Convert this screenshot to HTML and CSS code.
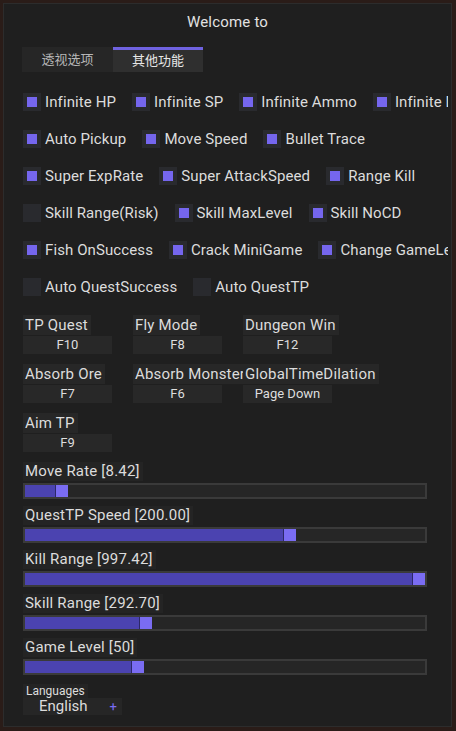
FILE: index.html
```html
<!DOCTYPE html>
<html>
<head>
<meta charset="utf-8">
<link rel="stylesheet" href="styles.css">
</head>
<body>
<div class="window">
  <div class="title">Welcome to</div>
  <div class="tabs">
    <div class="tab">透视选项</div>
    <div class="tab active">其他功能</div>
  </div>
  <div class="content">
    <div class="row">
      <div class="cb on"><span class="box"></span>Infinite HP</div>
      <div class="cb on"><span class="box"></span>Infinite SP</div>
      <div class="cb on"><span class="box"></span>Infinite Ammo</div>
      <div class="cb on"><span class="box"></span>Infinite Durability</div>
    </div>
    <div class="row">
      <div class="cb on"><span class="box"></span>Auto Pickup</div>
      <div class="cb on"><span class="box"></span>Move Speed</div>
      <div class="cb on"><span class="box"></span>Bullet Trace</div>
    </div>
    <div class="row">
      <div class="cb on"><span class="box"></span>Super ExpRate</div>
      <div class="cb on"><span class="box"></span>Super AttackSpeed</div>
      <div class="cb on"><span class="box"></span>Range Kill</div>
    </div>
    <div class="row">
      <div class="cb"><span class="box"></span>Skill Range(Risk)</div>
      <div class="cb on"><span class="box"></span>Skill MaxLevel</div>
      <div class="cb on"><span class="box"></span>Skill NoCD</div>
    </div>
    <div class="row">
      <div class="cb on"><span class="box"></span>Fish OnSuccess</div>
      <div class="cb on"><span class="box"></span>Crack MiniGame</div>
      <div class="cb on"><span class="box"></span>Change GameLevel</div>
    </div>
    <div class="row">
      <div class="cb"><span class="box"></span>Auto QuestSuccess</div>
      <div class="cb"><span class="box"></span>Auto QuestTP</div>
    </div>

    <div class="keys">
      <div class="key"><span class="klabel">TP Quest</span><div class="kbtn">F10</div></div>
      <div class="key"><span class="klabel">Fly Mode</span><div class="kbtn">F8</div></div>
      <div class="key"><span class="klabel">Dungeon Win</span><div class="kbtn">F12</div></div>
      <div class="key"><span class="klabel">Absorb Ore</span><div class="kbtn">F7</div></div>
      <div class="key"><span class="klabel">Absorb Monster</span><div class="kbtn">F6</div></div>
      <div class="key"><span class="klabel">GlobalTimeDilation</span><div class="kbtn">Page Down</div></div>
      <div class="key"><span class="klabel">Aim TP</span><div class="kbtn">F9</div></div>
    </div>

    <div class="sliders">
      <div class="slider">
        <span class="slabel">Move Rate [8.42]</span>
        <div class="track"><div class="fill" style="width:30px"></div><div class="thumb"></div></div>
      </div>
      <div class="slider">
        <span class="slabel">QuestTP Speed [200.00]</span>
        <div class="track"><div class="fill" style="width:258px"></div><div class="thumb"></div></div>
      </div>
      <div class="slider">
        <span class="slabel">Kill Range [997.42]</span>
        <div class="track"><div class="fill" style="width:387px"></div><div class="thumb"></div></div>
      </div>
      <div class="slider">
        <span class="slabel">Skill Range [292.70]</span>
        <div class="track"><div class="fill" style="width:114px"></div><div class="thumb"></div></div>
      </div>
      <div class="slider">
        <span class="slabel">Game Level [50]</span>
        <div class="track"><div class="fill" style="width:106px"></div><div class="thumb"></div></div>
      </div>
    </div>

    <div class="lang">
      <span class="llabel">Languages</span>
      <div class="combo"><span class="cval">English</span><span class="plus">+</span></div>
    </div>
  </div>
</div>
</body>
</html>
```

FILE: styles.css
```css
* { box-sizing: border-box; }
html, body {
  margin: 0;
  padding: 0;
  width: 456px;
  height: 731px;
  overflow: hidden;
  background: #2a1c18;
  font-family: Roboto, "Noto Sans CJK SC", sans-serif;
  color: #dcdcdc;
}
.window {
  margin: 3px 0 0 3px;
  width: 449px;
  height: 724px;
  background: #1f1f1f;
  border: 1px solid #2c2c2c;
  position: relative;
  overflow: hidden;
}
.title {
  height: 38px;
  line-height: 36px;
  text-align: center;
  font-size: 15px;
  letter-spacing: 0.2px;
  color: #e2e2e2;
}
.tabs {
  display: flex;
  margin: 5px 0 0 18px;
  width: 181px;
  height: 25px;
  background: #262626;
}
.tab {
  width: 91px;
  text-align: center;
  font-size: 13px;
  line-height: 25px;
  color: #b8b8b8;
}
.tab.active {
  width: 90px;
  background: #2f2f2f;
  border-top: 3px solid #6f62e0;
  line-height: 21px;
  color: #e6e6e6;
}
.content {
  padding: 20px 0 0 19px;
  width: 444px;
  overflow: hidden;
}
.row {
  display: flex;
  white-space: nowrap;
  height: 18px;
  margin-bottom: 19px;
  gap: 16px;
}
.row:first-child { margin-top: 1px; }
.cb {
  display: flex;
  align-items: center;
  gap: 4px;
  font-size: 15px;
  letter-spacing: 0.1px;
  line-height: 18px;
  flex: none;
}
.box {
  width: 18px;
  height: 18px;
  background: #292a2e;
  display: flex;
  align-items: center;
  justify-content: center;
}
.cb.on .box::after {
  content: "";
  width: 10px;
  height: 10px;
  background: #7566ee;
}
.keys {
  display: grid;
  grid-template-columns: 110px 110px 110px;
  row-gap: 10px;
  margin-top: 0;
}
.key {
  display: flex;
  flex-direction: column;
  align-items: flex-start;
  gap: 1px;
  white-space: nowrap;
}
.klabel {
  font-size: 15px;
  letter-spacing: 0.2px;
  line-height: 20px;
  padding: 0 3px 0 2px;
  background: #272727;
  position: relative;
}
.kbtn {
  width: 89px;
  height: 18px;
  background: #282828;
  font-size: 13px;
  line-height: 18px;
  text-align: center;
  color: #dedede;
}
.sliders {
  margin-top: 10px;
  display: flex;
  flex-direction: column;
  gap: 7px;
}
.slider {
  display: flex;
  flex-direction: column;
  align-items: flex-start;
  gap: 2px;
}
.slabel {
  font-size: 15px;
  letter-spacing: 0.2px;
  line-height: 19px;
  padding: 0 3px 0 2px;
  background: #242424;
}
.track {
  width: 404px;
  height: 16px;
  border: 2px solid #3a3a3a;
  background: #262626;
  display: flex;
  padding: 0;
}
.fill {
  height: 100%;
  background: #4b43b0;
}
.thumb {
  width: 13px;
  height: 100%;
  background: #7a6cf2;
  border-left: 1px solid #2c2868;
}
.lang {
  margin-top: 9px;
  display: flex;
  flex-direction: column;
  align-items: flex-start;
}
.llabel {
  font-size: 12px;
  line-height: 14px;
  padding: 0 3px;
  background: #242424;
}
.combo {
  width: 99px;
  height: 17px;
  background: #262626;
  display: flex;
  align-items: center;
  font-size: 15px;
  position: relative;
}
.cval {
  padding-left: 16px;
  line-height: 17px;
}
.plus {
  margin-left: auto;
  margin-right: 5px;
  color: #7a6cf2;
  font-size: 13px;
}
```
